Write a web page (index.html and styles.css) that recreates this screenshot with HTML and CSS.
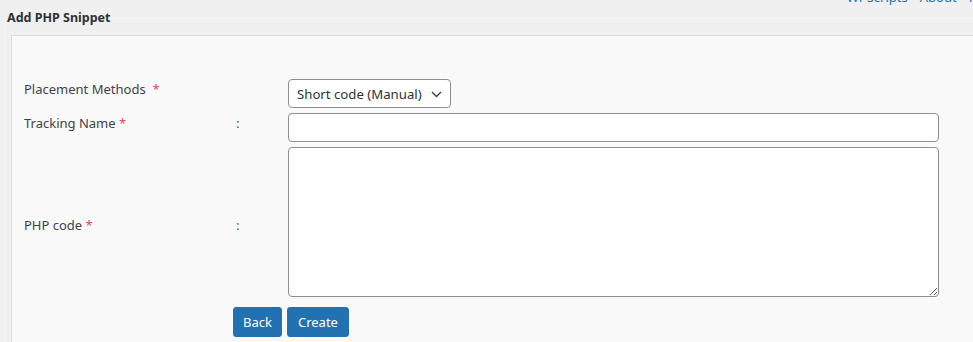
FILE: index.html
```html
<!DOCTYPE html>
<html>
<head>
<meta charset="utf-8">
<link rel="stylesheet" href="styles.css">
</head>
<body>
<div class="toplinks"><a href="#">WPScripts</a><a href="#">About</a><a href="#">Help</a></div>
<fieldset class="panel">
  <legend class="panel-title">Add PHP Snippet</legend>
  <div class="box">
    <form class="form">
      <label class="lbl lbl-up">Placement Methods&nbsp;&nbsp;<span class="req">*</span></label>
      <span class="colon"></span>
      <div class="field">
        <div class="select-wrap">
          <select class="select"><option>Short code (Manual)</option></select>
          <svg class="chev" width="11" height="7" viewBox="0 0 11 7"><path d="M1 1l4.5 4.5L10 1" fill="none" stroke="#3c434a" stroke-width="1.4"/></svg>
        </div>
      </div>

      <label class="lbl lbl-up">Tracking Name&nbsp;<span class="req">*</span></label>
      <span class="colon colon-up">:</span>
      <div class="field"><input class="input" type="text"></div>

      <label class="lbl lbl-down">PHP code <span class="req">*</span></label>
      <span class="colon colon-down">:</span>
      <div class="field"><textarea class="textarea"></textarea></div>

      <div class="actions">
        <button type="button" class="btn btn-back">Back</button>
        <button type="button" class="btn">Create</button>
      </div>
    </form>
  </div>
</fieldset>
</body>
</html>
```
FILE: styles.css
```css
html, body {
  margin: 0;
  padding: 0;
  background: #f0f0f1;
  font-family: "Noto Sans", "Open Sans", sans-serif;
  color: #3c434a;
  overflow: hidden;
  height: 342px;
}
.toplinks {
  display: flex;
  justify-content: flex-end;
  gap: 12px;
  height: 6px;
  margin-top: -11px;
  margin-right: -24px;
  font-size: 13px;
  line-height: 16px;
}
.toplinks a {
  color: #2271b1;
  text-decoration: none;
}
.panel {
  margin: 15px -20px 0 5px;
  padding: 9px 0 0 5px;
  border: 0;
  border-top: 1px solid #f7f7f7;
  border-left: 1px solid #f7f7f7;
  min-width: 0;
}
.panel-title {
  font-size: 12.5px;
  font-weight: 700;
  line-height: 16px;
  padding: 0;
  margin-left: -4px;
  color: #2c3338;
}
.box {
  background: #f9f9f9;
  border-top: 1px solid #dcdcde;
  border-left: 1px solid #dcdcde;
  padding: 43px 14px 20px 12px;
  height: 400px;
}
.form {
  display: grid;
  grid-template-columns: 209px 55px 651px;
  row-gap: 5px;
  align-items: center;
}
.lbl {
  font-size: 13px;
  line-height: 18px;
  color: #3c434a;
}
.lbl-up { margin-bottom: 9px; }
.lbl-down { margin-top: 6px; }
.req {
  color: #e0456a;
  font-size: 13px;
}
.colon {
  font-size: 13px;
  color: #2c5d8f;
  padding-left: 3px;
}
.colon-up { margin-bottom: 9px; }
.colon-down { margin-top: 6px; }
.field { display: flex; }
.select-wrap {
  position: relative;
  display: inline-block;
}
.select {
  appearance: none;
  -webkit-appearance: none;
  font-family: inherit;
  font-size: 13.2px;
  color: #2c3338;
  height: 29px;
  width: 163px;
  padding: 0 20px 0 8px;
  border: 1px solid #8c8f94;
  border-radius: 4px;
  background: #fff;
  box-sizing: border-box;
}
.chev {
  position: absolute;
  right: 9px;
  top: 12px;
  pointer-events: none;
}
.input {
  width: 651px;
  height: 29px;
  box-sizing: border-box;
  border: 1px solid #8c8f94;
  border-radius: 4px;
  background: #fff;
}
.textarea {
  width: 651px;
  height: 150px;
  box-sizing: border-box;
  border: 1px solid #8c8f94;
  border-radius: 4px;
  background: #fff;
  margin: 0;
  display: block;
}
.actions {
  grid-column: 2 / 4;
  display: flex;
  gap: 5px;
  margin-top: 5px;
}
.btn {
  font-family: inherit;
  font-size: 13px;
  color: #fff;
  background: #2271b1;
  border: 1px solid #2271b1;
  border-radius: 3px;
  height: 30px;
  padding: 0 10px;
  cursor: pointer;
}
.btn-back {
  padding: 0 9px;
}
```
